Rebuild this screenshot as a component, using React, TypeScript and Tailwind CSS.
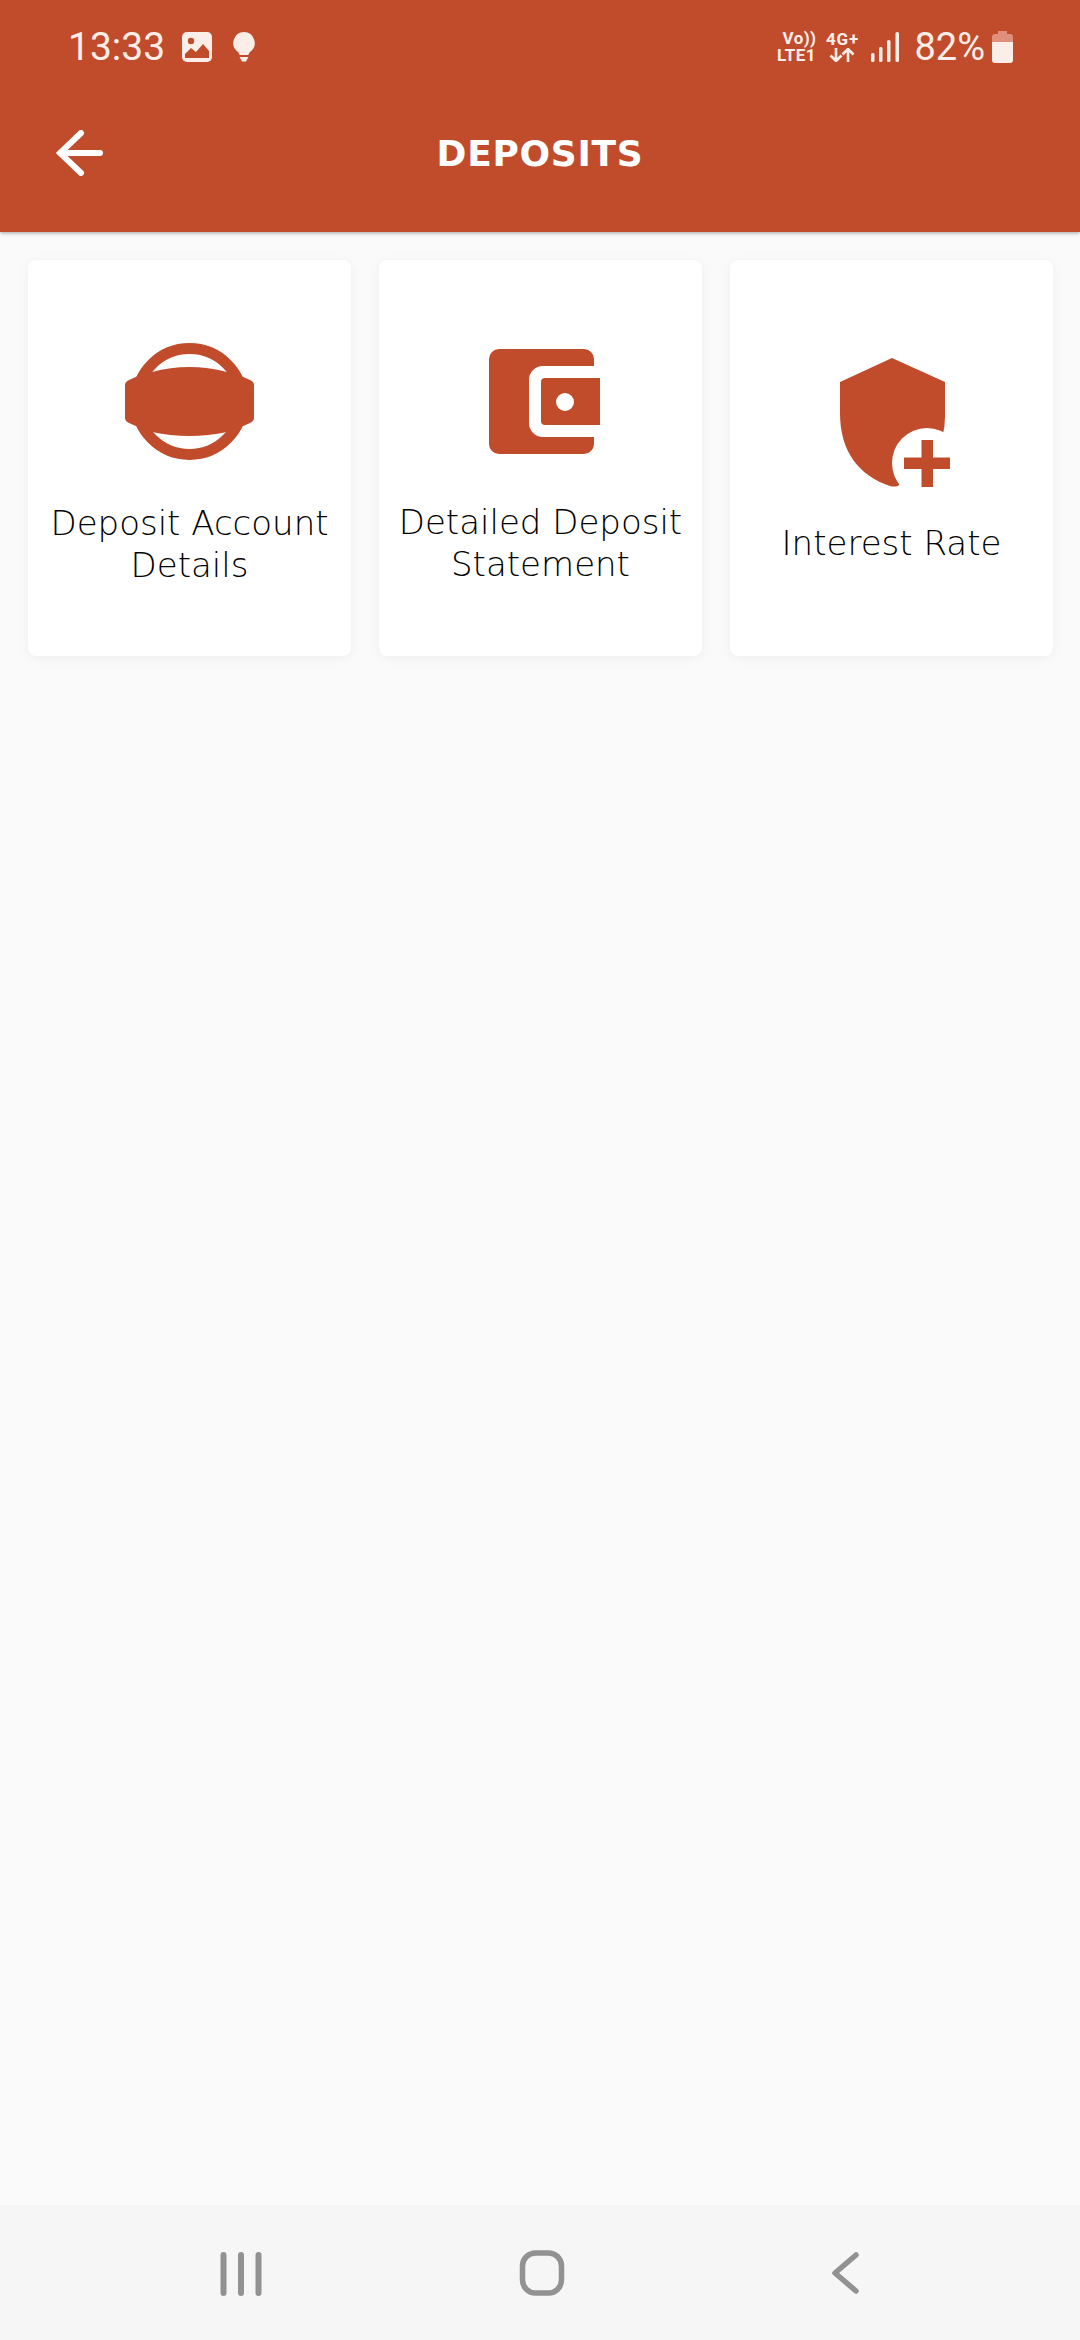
import React from "react";

const BRAND = "#c14c2b";

function StatusBar() {
  return (
    <div className="flex h-[96px] items-center justify-between pb-[3px] pl-[68px] pr-[67px] text-[#fbeee9] font-['Roboto',sans-serif]">
      <div className="flex items-center">
        <span className="text-[39px] leading-[38px]">13:33</span>
        <svg width="30" height="30" viewBox="0 0 30 30" className="ml-[17px]">
          <rect width="30" height="30" rx="5" fill="#fbeee9" />
          <circle cx="9" cy="9" r="3.2" fill={BRAND} />
          <path d="M3 26v-4l6-6 5 4 7-8 6 7v7z" fill={BRAND} />
        </svg>
        <svg width="22" height="30" viewBox="0 0 22 30" className="ml-[21px]">
          <path d="M11 0a11 11 0 0 1 6 20c-1 1-1.500 2-1.500 3h-9c0-1-.5-2-1.500-3A11 11 0 0 1 11 0z" fill="#fbeee9" />
          <path d="M6.500 25h9l-2.500 4.500h-4z" fill="#fbeee9" />
        </svg>
      </div>
      <div className="flex items-center">
        <div className="flex w-[40px] flex-col items-center text-[17px] font-bold leading-[17px] tracking-[0.4px]">
          <span className="pl-[6px]">Vo))</span>
          <span>LTE1</span>
        </div>
        <div className="ml-[9px] flex w-[34px] flex-col items-center text-[17px] font-bold leading-[17px] tracking-[0.8px]">
          <span>4G+</span>
          <svg width="26" height="14" viewBox="0 0 26 14" fill="none" stroke="#fbeee9" strokeWidth="2.600">
            <path d="M7 0v13M1.500 7.500 7 13l5.500-5.500M19 14V1M13.500 6.500 19 1l5.500 5.500" />
          </svg>
        </div>
        <svg width="28" height="30" viewBox="0 0 28 30" className="ml-[12px]" fill="#fbeee9">
          <rect x="0" y="21" width="3.500" height="9" rx="1.500" />
          <rect x="8" y="15" width="3.500" height="15" rx="1.500" />
          <rect x="16" y="8" width="3.500" height="22" rx="1.500" />
          <rect x="24.500" y="0" width="3.500" height="30" rx="1.500" />
        </svg>
        <span className="ml-[15px] text-[38px] leading-[38px]">82%</span>
        <svg width="21" height="32" viewBox="0 0 21 32" className="ml-[7px]">
          <path d="M6 0h9v3h3a3 3 0 0 1 3 3v5H0V6a3 3 0 0 1 3-3h3z" fill="#e08f7a" />
          <path d="M0 11h21v18a3 3 0 0 1-3 3H3a3 3 0 0 1-3-3z" fill="#fbeee9" />
        </svg>
      </div>
    </div>
  );
}

function AccountIcon() {
  return (
    <svg width="130" height="118" viewBox="0 0 130 118" className="ml-[1px] shrink-0">
      <circle cx="64.500" cy="58.500" r="53" fill="none" stroke={BRAND} strokeWidth="11" />
      <path
        d="M0 42Q0 39 4 37L13 33L27 29Q64 19 102 29L116 33L125 37Q129 39 129 42V75Q129 78 125 80L116 84L102 89Q64 97 27 89L13 84L4 80Q0 78 0 75Z"
        fill={BRAND}
      />
    </svg>
  );
}

function WalletIcon() {
  return (
    <svg width="111" height="105" viewBox="0 0 111 105" className="ml-[7px] shrink-0">
      <path
        d="M10 0H95a10 10 0 0 1 10 10V17H54a14 14 0 0 0-14 14V74a14 14 0 0 0 14 14H105V95a10 10 0 0 1-10 10H10A10 10 0 0 1 0 95V10A10 10 0 0 1 10 0Z"
        fill={BRAND}
      />
      <path d="M56 29H111V76H56a4 4 0 0 1-4-4V33a4 4 0 0 1 4-4Z" fill={BRAND} />
      <circle cx="76" cy="53" r="9" fill="#fff" />
    </svg>
  );
}

function ShieldIcon() {
  return (
    <svg width="110" height="129" viewBox="0 0 110 129" className="ml-[6px] shrink-0">
      <path d="M52 0 105 24V58Q105 68 103 76L58 128Q53 129 50 128C20 118 0 95 0 55V24Z" fill={BRAND} />
      <circle cx="87" cy="105" r="35" fill="#fff" />
      <path d="M81.500 82H93V99.500H110V111H93V129H81.500V111H64V99.500H81.500Z" fill={BRAND} />
    </svg>
  );
}

function Card({ pad, gap, icon, lines }: { pad: string; gap: string; icon: React.ReactNode; lines: string[] }) {
  return (
    <div className={`flex h-[396px] flex-col items-center rounded-[8px] bg-white shadow-[0_2px_12px_rgba(0,0,0,0.05)] ${pad}`}>
      {icon}
      <div className={`text-center font-['DejaVu_Sans',sans-serif] text-[34px] font-extralight leading-[42px] whitespace-nowrap text-[#000000] ${gap}`}>
        {lines.map((l) => (
          <div key={l}>{l}</div>
        ))}
      </div>
    </div>
  );
}

function NavBar() {
  return (
    <div className="flex h-[135px] items-start bg-[#f6f6f6] pl-[220px] pt-[45px]">
      <svg width="42" height="46" viewBox="0 0 42 46" fill="none" stroke="#929292" strokeWidth="6" strokeLinecap="round">
        <path d="M3.500 5V43M21 5V43M38.500 5V43" />
      </svg>
      <svg width="46" height="46" viewBox="0 0 46 46" fill="none" stroke="#929292" strokeWidth="5.500" className="ml-[257px]">
        <rect x="3.500" y="3" width="39" height="40" rx="13" />
      </svg>
      <svg width="28" height="46" viewBox="0 0 28 46" fill="none" stroke="#929292" strokeWidth="5.500" strokeLinecap="round" strokeLinejoin="round" className="ml-[266px]">
        <path d="M25 5 4 23 25 41" />
      </svg>
    </div>
  );
}

export default function App() {
  return (
    <div className="flex h-[2340px] w-[1080px] flex-col overflow-hidden bg-[#fafafa]">
      <header className="relative z-10 h-[232px] shrink-0 bg-[#c14c2b] shadow-[0_1px_4px_rgba(0,0,0,0.35)]">
        <StatusBar />
        <div className="relative flex h-[114px] items-center justify-center pt-[2px]">
          <svg width="48" height="46" viewBox="0 0 48 46" fill="none" stroke="#fff" strokeWidth="6" strokeLinecap="round" className="absolute left-[56px] top-[34px]">
            <path d="M25 3 4 23l21 20M4 23H44" />
          </svg>
          <span className="font-['DejaVu_Sans',sans-serif] text-[36px] font-bold tracking-[0.7px] text-white">DEPOSITS</span>
        </div>
      </header>
      <main className="flex-1">
        <div className="grid grid-cols-3 gap-[28px] pl-[28px] pr-[27px] pt-[28px]">
          <Card pad="pt-[83px]" gap="mt-[41px]" icon={<AccountIcon />} lines={["Deposit Account", "Details"]} />
          <Card pad="pt-[89px]" gap="mt-[47px]" icon={<WalletIcon />} lines={["Detailed Deposit", "Statement"]} />
          <Card pad="pt-[98px]" gap="mt-[35px]" icon={<ShieldIcon />} lines={["Interest Rate"]} />
        </div>
      </main>
      <NavBar />
    </div>
  );
}
